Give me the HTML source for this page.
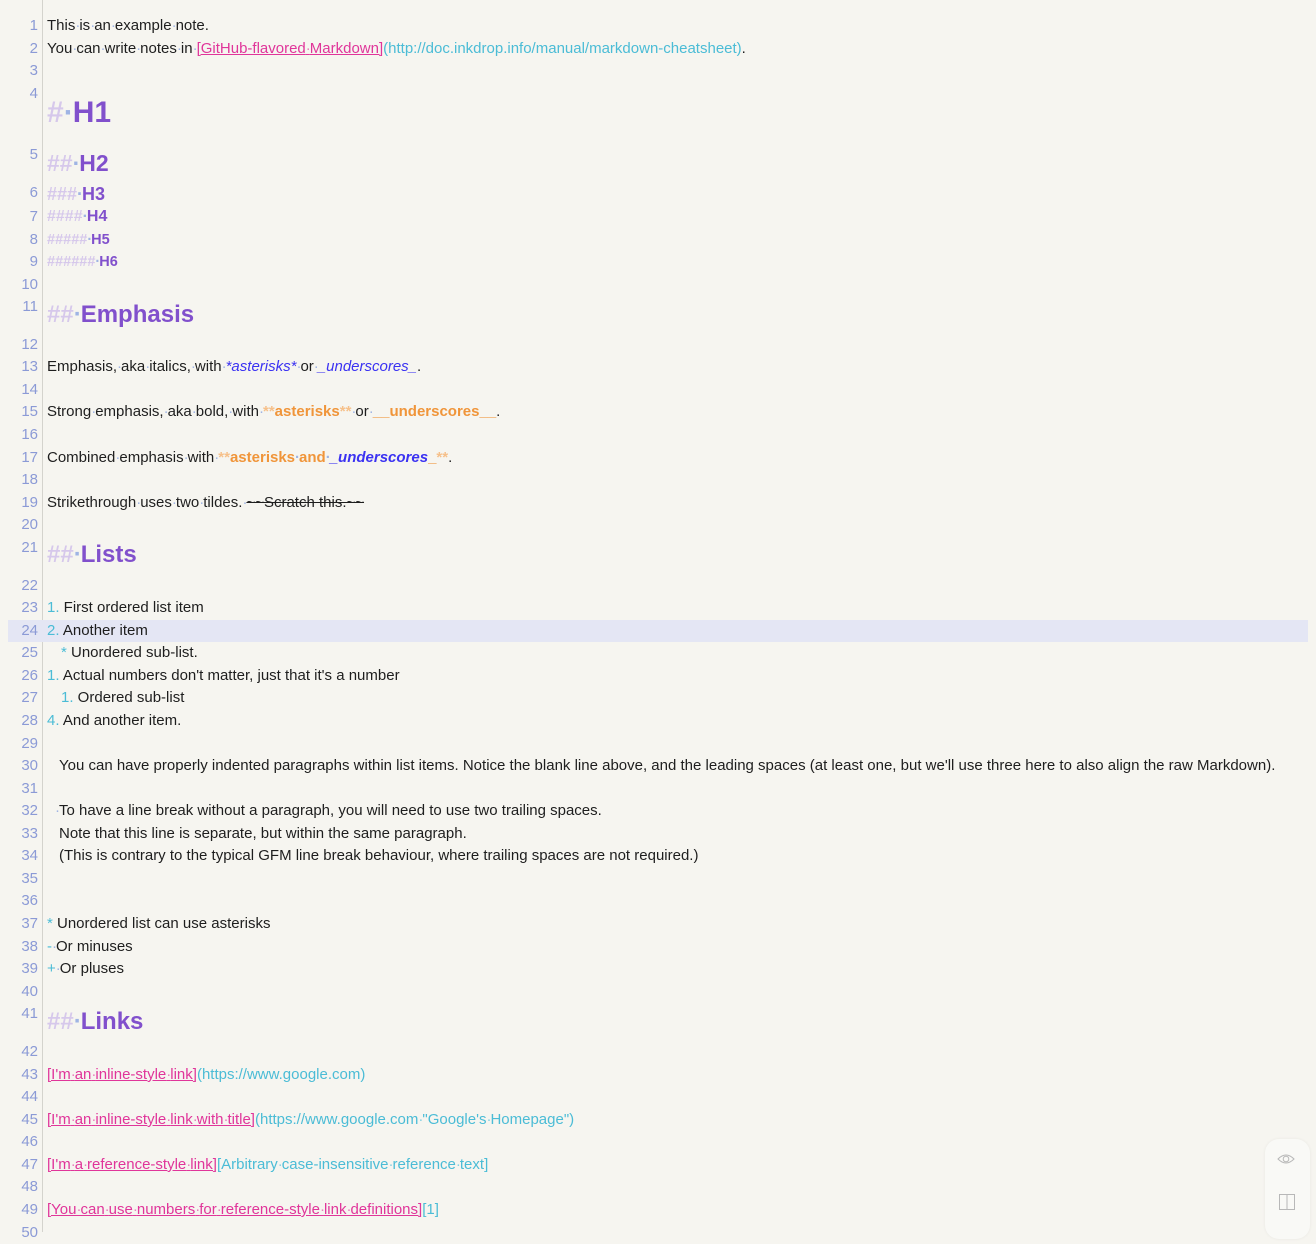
<!DOCTYPE html>
<html><head><meta charset="utf-8"><style>
html,body{margin:0;padding:0;}
body{width:1316px;height:1232px;overflow:hidden;background:#f6f5f0;font-family:"Liberation Sans",sans-serif;font-size:15px;color:#1e1e1e;position:relative;}
.gut{position:absolute;left:0;top:0;width:42px;height:1232px;border-right:1px solid #d4d3cd;}
#ed{position:absolute;left:0;top:15px;width:1316px;}
.r{position:relative;height:22.55px;line-height:22.55px;white-space:pre;}
.n{position:absolute;left:0;width:38px;text-align:right;top:0;height:22.5px;line-height:22.5px;color:#8b9ad6;font-size:15px;}
.c{position:absolute;left:47px;top:0;bottom:0;display:flex;align-items:center;}
.act{background:#e4e6f4;left:8px;right:8px;}
i{font-style:normal;color:#9fb4e4;letter-spacing:-1px;}
.h{color:#8150cc;font-weight:bold;}
.hm{color:#d6c8eb;font-weight:bold;}
.lk{color:#e0359a;text-decoration:underline;}
.lk i{color:#e87dbd;}
.url{color:#4bbcd6;}
.url i{color:#86d0e2;}
.em{color:#3b32f2;font-style:italic;}
.em i{font-style:normal;}
.st{color:#f0953a;font-weight:bold;}
.stm{color:#f6c08a;font-weight:bold;}
.li{color:#4bbcd6;}
.s{text-decoration:line-through;color:#1e1e1e;}
.panel{position:absolute;left:1265px;top:1139px;width:45px;height:100px;border-radius:14px;background:#f9f9f6;box-shadow:0 0 3px rgba(0,0,0,.06);}
</style></head><body>
<div class="gut"></div>
<div id="ed">
<div class="r"><span class="n">1</span><span class="c">This<i>·</i>is<i>·</i>an<i>·</i>example<i>·</i>note.</span></div>
<div class="r"><span class="n">2</span><span class="c">You<i>·</i>can<i>·</i>write<i>·</i>notes<i>·</i>in<i>·</i><span class="lk">[GitHub-flavored<i>·</i>Markdown]</span><span class="url">(http://doc.inkdrop.info/manual/markdown-cheatsheet)</span>.</span></div>
<div class="r"><span class="n">3</span></div>
<div class="r" style="height:61.5px"><span class="n">4</span><span class="c" style="font-size:30px"><span class="hm">#<i>·</i></span><span class="h">H1</span></span></div>
<div class="r" style="height:38px"><span class="n">5</span><span class="c" style="font-size:23px"><span class="hm">##<i>·</i></span><span class="h">H2</span></span></div>
<div class="r" style="height:24px"><span class="n">6</span><span class="c" style="font-size:18px"><span class="hm">###<i>·</i></span><span class="h">H3</span></span></div>
<div class="r"><span class="n">7</span><span class="c" style="font-size:16px"><span class="hm">####<i>·</i></span><span class="h">H4</span></span></div>
<div class="r"><span class="n">8</span><span class="c" style="font-size:14.5px"><span class="hm">#####<i>·</i></span><span class="h">H5</span></span></div>
<div class="r"><span class="n">9</span><span class="c" style="font-size:14.5px"><span class="hm">######<i>·</i></span><span class="h">H6</span></span></div>
<div class="r"><span class="n">10</span></div>
<div class="r" style="height:37.5px"><span class="n">11</span><span class="c" style="font-size:24px"><span class="hm">##<i>·</i></span><span class="h">Emphasis</span></span></div>
<div class="r"><span class="n">12</span></div>
<div class="r"><span class="n">13</span><span class="c">Emphasis,<i>·</i>aka<i>·</i>italics,<i>·</i>with<i>·</i><span class="em">*asterisks*</span><i>·</i>or<i>·</i><span class="em">_underscores_</span>.</span></div>
<div class="r"><span class="n">14</span></div>
<div class="r"><span class="n">15</span><span class="c">Strong<i>·</i>emphasis,<i>·</i>aka<i>·</i>bold,<i>·</i>with<i>·</i><span class="stm">**</span><span class="st">asterisks</span><span class="stm">**</span><i>·</i>or<i>·</i><span class="st">__underscores__</span>.</span></div>
<div class="r"><span class="n">16</span></div>
<div class="r"><span class="n">17</span><span class="c">Combined<i>·</i>emphasis<i>·</i>with<i>·</i><span class="stm">**</span><span class="st">asterisks<i>·</i>and<i>·</i></span><span class="em" style="font-weight:bold">_underscores</span><span class="st">_</span><span class="stm">**</span>.</span></div>
<div class="r"><span class="n">18</span></div>
<div class="r"><span class="n">19</span><span class="c">Strikethrough<i>·</i>uses<i>·</i>two<i>·</i>tildes.<i>·</i><span class="s">~~Scratch this.~~</span></span></div>
<div class="r"><span class="n">20</span></div>
<div class="r" style="height:38px"><span class="n">21</span><span class="c" style="font-size:24px"><span class="hm">##<i>·</i></span><span class="h">Lists</span></span></div>
<div class="r"><span class="n">22</span></div>
<div class="r"><span class="n">23</span><span class="c"><span class="li">1.</span> First ordered list item</span></div>
<div class="r"><span class="c act" style="left:8px;right:8px;"></span><span class="n">24</span><span class="c"><span class="li">2.</span> Another item</span></div>
<div class="r"><span class="n">25</span><span class="c" style="padding-left:14px"><span class="li">*</span> Unordered sub-list.</span></div>
<div class="r"><span class="n">26</span><span class="c"><span class="li">1.</span> Actual numbers don't matter, just that it's a number</span></div>
<div class="r"><span class="n">27</span><span class="c" style="padding-left:14px"><span class="li">1.</span> Ordered sub-list</span></div>
<div class="r"><span class="n">28</span><span class="c"><span class="li">4.</span> And another item.</span></div>
<div class="r"><span class="n">29</span></div>
<div class="r"><span class="n">30</span><span class="c" style="padding-left:12px">You can have properly indented paragraphs within list items. Notice the blank line above, and the leading spaces (at least one, but we'll use three here to also align the raw Markdown).</span></div>
<div class="r"><span class="n">31</span></div>
<div class="r"><span class="n">32</span><span class="c" style="padding-left:8px"><i>·</i>To have a line break without a paragraph, you will need to use two trailing spaces.</span></div>
<div class="r"><span class="n">33</span><span class="c" style="padding-left:12px">Note that this line is separate, but within the same paragraph.</span></div>
<div class="r"><span class="n">34</span><span class="c" style="padding-left:12px">(This is contrary to the typical GFM line break behaviour, where trailing spaces are not required.)</span></div>
<div class="r"><span class="n">35</span></div>
<div class="r"><span class="n">36</span></div>
<div class="r"><span class="n">37</span><span class="c"><span class="li">*</span> Unordered list can use asterisks</span></div>
<div class="r"><span class="n">38</span><span class="c"><span class="li">-</span><i>·</i>Or minuses</span></div>
<div class="r"><span class="n">39</span><span class="c"><span class="li">+</span><i>·</i>Or pluses</span></div>
<div class="r"><span class="n">40</span></div>
<div class="r" style="height:38px"><span class="n">41</span><span class="c" style="font-size:24px"><span class="hm">##<i>·</i></span><span class="h">Links</span></span></div>
<div class="r"><span class="n">42</span></div>
<div class="r"><span class="n">43</span><span class="c"><span class="lk">[I'm<i>·</i>an<i>·</i>inline-style<i>·</i>link]</span><span class="url">(https://www.google.com)</span></span></div>
<div class="r"><span class="n">44</span></div>
<div class="r"><span class="n">45</span><span class="c"><span class="lk">[I'm<i>·</i>an<i>·</i>inline-style<i>·</i>link<i>·</i>with<i>·</i>title]</span><span class="url">(https://www.google.com<i>·</i>"Google's<i>·</i>Homepage")</span></span></div>
<div class="r"><span class="n">46</span></div>
<div class="r"><span class="n">47</span><span class="c"><span class="lk">[I'm<i>·</i>a<i>·</i>reference-style<i>·</i>link]</span><span class="url">[Arbitrary<i>·</i>case-insensitive<i>·</i>reference<i>·</i>text]</span></span></div>
<div class="r"><span class="n">48</span></div>
<div class="r"><span class="n">49</span><span class="c"><span class="lk">[You<i>·</i>can<i>·</i>use<i>·</i>numbers<i>·</i>for<i>·</i>reference-style<i>·</i>link<i>·</i>definitions]</span><span class="url">[1]</span></span></div>
<div class="r"><span class="n">50</span></div>
</div>
<div class="panel">
<svg style="position:absolute;left:12px;top:14px" width="18" height="12" viewBox="0 0 18 12"><path d="M1 6 Q9 -2 17 6 Q9 14 1 6Z" fill="none" stroke="#b8b8b8" stroke-width="1"/><circle cx="9" cy="6" r="2.8" fill="none" stroke="#b8b8b8" stroke-width="1"/></svg>
<svg style="position:absolute;left:14px;top:55px" width="16" height="16" viewBox="0 0 16 16"><rect x="0.5" y="0.5" width="15" height="15" fill="none" stroke="#b8b8b8"/><line x1="8" y1="0.5" x2="8" y2="15.5" stroke="#b8b8b8"/></svg>
</div>
</body></html>
